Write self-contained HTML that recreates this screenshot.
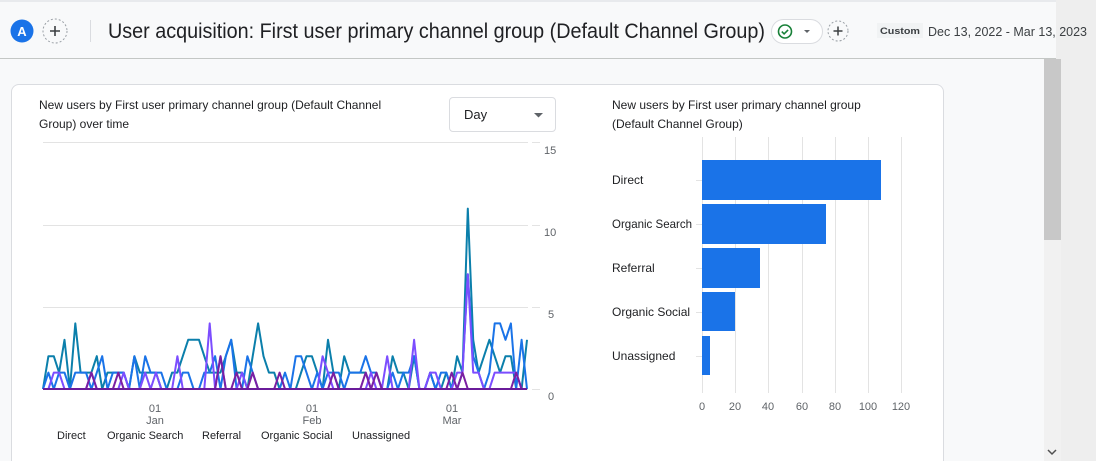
<!DOCTYPE html>
<html style="height:461px;overflow:hidden"><head><meta charset="utf-8"><style>
html,body{margin:0;width:1096px;height:461px;overflow:hidden}
body{background:#eeeeee;font-family:"Liberation Sans",Roboto,sans-serif;position:relative}
.abs{position:absolute}
#main{left:0;top:0;width:1044px;height:461px;background:#f8f9fa}
#hdr{left:0;top:0;width:1056px;height:59px;background:#f8f9fa;border-bottom:1px solid #c4c7c5;border-top:2px solid #e8eaed;box-sizing:border-box}
.card{left:11px;top:84px;width:931px;height:390px;background:#fff;border:1px solid #dadce0;border-radius:8px}
.t{color:#202124}
</style></head><body>
<div class="abs" id="main"></div>
<div class="abs" style="left:1044px;top:59px;width:17px;height:402px;background:#f1f1f1"></div>
<div class="abs" style="left:1044px;top:59px;width:17px;height:181px;background:#c8c8c8"></div>
<svg class="abs" style="left:1046px;top:448px" width="12" height="8"><path d="M2 2l4 4 4-4" fill="none" stroke="#505050" stroke-width="1.5"/></svg>
<div class="abs" id="hdr"></div>
<svg class="abs" style="left:0;top:0" width="1096" height="60" font-family="Liberation Sans">
 <circle cx="22" cy="31" r="11.5" fill="#1a73e8"/>
 <text x="22" y="36" font-size="13" fill="#fff" text-anchor="middle" font-weight="bold">A</text>
 <circle cx="55" cy="31" r="12" fill="none" stroke="#9aa0a6" stroke-dasharray="2,2"/>
 <path d="M55 26v10M50 31h10" stroke="#3c4043" stroke-width="1.6"/>
 <line x1="90.5" y1="20" x2="90.5" y2="42" stroke="#dadce0"/>
 <text x="108" y="38" font-size="21" fill="#202124" textLength="657" lengthAdjust="spacingAndGlyphs">User acquisition: First user primary channel group (Default Channel Group)</text>
 <rect x="771.5" y="19.5" width="51" height="24" rx="12" fill="#fff" stroke="#dadce0"/>
 <circle cx="785" cy="31.5" r="6.5" fill="none" stroke="#188038" stroke-width="1.6"/>
 <path d="M781.8 31.6l2.3 2.3 4-4" fill="none" stroke="#188038" stroke-width="1.6"/>
 <path d="M804 30h6l-3 3z" fill="#5f6368"/>
 <circle cx="838" cy="31" r="10" fill="none" stroke="#9aa0a6" stroke-dasharray="2,2"/>
 <path d="M838 26.5v9M833.5 31h9" stroke="#3c4043" stroke-width="1.5"/>
 <rect x="877" y="23" width="46" height="15" fill="#f1f3f4"/>
 <text x="900" y="34" font-size="9.5" font-weight="bold" fill="#3c4043" text-anchor="middle" textLength="40" lengthAdjust="spacingAndGlyphs">Custom</text>
 <text x="928" y="36" font-size="13" fill="#3c4043" textLength="159" lengthAdjust="spacingAndGlyphs">Dec 13, 2022 - Mar 13, 2023</text>
</svg>
<div class="abs card"></div>
<div class="abs t" style="left:39px;top:96px;font-size:12px;line-height:19px;width:380px">New users by First user primary channel group (Default Channel Group) over time</div>
<div class="abs" style="left:449px;top:97px;width:107px;height:35px;border:1px solid #dadce0;border-radius:4px;box-sizing:border-box"></div>
<div class="abs t" style="left:464px;top:107px;font-size:13px">Day</div>
<svg class="abs" style="left:534px;top:113px" width="10" height="6"><path d="M0 0h9L4.5 4.5z" fill="#5f6368"/></svg>
<div class="abs t" style="left:612px;top:96px;font-size:12px;line-height:19px;width:290px">New users by First user primary channel group (Default Channel Group)</div>
<svg class="abs" style="left:0;top:0" width="1000" height="461" font-family="Liberation Sans">
 <g stroke="#e3e3e3">
  <line x1="43" y1="142.5" x2="528" y2="142.5"/><line x1="43" y1="225.5" x2="528" y2="225.5"/>
  <line x1="43" y1="307.5" x2="528" y2="307.5"/><line x1="43" y1="389.5" x2="528" y2="389.5"/>
  <line x1="532" y1="142.5" x2="540" y2="142.5"/><line x1="532" y1="225.5" x2="540" y2="225.5"/>
  <line x1="532" y1="307.5" x2="540" y2="307.5"/><line x1="532" y1="389.5" x2="540" y2="389.5"/>
 </g>
 <g font-size="11" fill="#5f6368">
  <text x="544" y="154">15</text><text x="544" y="236">10</text><text x="548" y="318">5</text><text x="548" y="400">0</text>
  <text x="155" y="412" text-anchor="middle">01</text><text x="155" y="424" text-anchor="middle">Jan</text>
  <text x="312" y="412" text-anchor="middle">01</text><text x="312" y="424" text-anchor="middle">Feb</text>
  <text x="452" y="412" text-anchor="middle">01</text><text x="452" y="424" text-anchor="middle">Mar</text>
 </g>
 <g font-size="11" fill="#202124">
  <text x="57" y="439">Direct</text><text x="107" y="439">Organic Search</text><text x="202" y="439">Referral</text><text x="261" y="439">Organic Social</text><text x="352" y="439">Unassigned</text>
 </g>
 <g id="lines" fill="none" stroke-width="2" stroke-linejoin="round"></g>
 <g stroke="#e3e3e3">
  <line x1="702.5" y1="137" x2="702.5" y2="393"/><line x1="735.5" y1="137" x2="735.5" y2="393"/>
  <line x1="768.5" y1="137" x2="768.5" y2="393"/><line x1="802.5" y1="137" x2="802.5" y2="393"/>
  <line x1="835.5" y1="137" x2="835.5" y2="393"/><line x1="868.5" y1="137" x2="868.5" y2="393"/>
  <line x1="901.5" y1="137" x2="901.5" y2="393"/>
  <line x1="696" y1="180.5" x2="702" y2="180.5"/><line x1="696" y1="224.5" x2="702" y2="224.5"/>
  <line x1="696" y1="268.5" x2="702" y2="268.5"/><line x1="696" y1="312.5" x2="702" y2="312.5"/>
  <line x1="696" y1="356.5" x2="702" y2="356.5"/>
 </g>
 <g fill="#1a73e8">
  <rect x="702" y="160" width="179" height="40"/><rect x="702" y="204" width="124" height="40"/>
  <rect x="702" y="248" width="58" height="40"/><rect x="702" y="292" width="33" height="39"/>
  <rect x="702" y="336" width="8" height="39"/>
 </g>
 <g font-size="12" fill="#202124">
  <text x="612" y="184">Direct</text><text x="612" y="228" textLength="80" lengthAdjust="spacingAndGlyphs">Organic Search</text><text x="612" y="272">Referral</text><text x="612" y="316">Organic Social</text><text x="612" y="360">Unassigned</text>
 </g>
 <g font-size="11" fill="#5f6368" text-anchor="middle">
  <text x="702" y="410">0</text><text x="735" y="410">20</text><text x="768" y="410">40</text><text x="802" y="410">60</text><text x="835" y="410">80</text><text x="868" y="410">100</text><text x="901" y="410">120</text>
 </g>
</svg>
<script>
var S=[
["#0b7fab",[0,2,2,1,3,0,4,1,1,1,2,0,1,1,1,1,0,2,1,1,1,1,0,0,1,1,2,3,3,3,2,1,1,1,2,3,1,1,0,2,4,2,1,1,0,0,0,0,1,2,2,1,0,3,1,0,2,1,1,1,1,0,0,0,0,2,1,1,0,2,0,0,1,0,0,1,0,2,1,11,3,1,2,3,2,1,2,2,0,0,3]],
["#1a73e8",[0,1,0,1,1,0,1,1,1,0,1,2,0,1,1,1,0,2,0,2,1,1,1,0,0,0,1,1,0,0,1,1,2,0,2,3,0,0,2,1,0,0,0,0,0,1,0,2,2,1,0,1,0,1,1,1,0,1,1,1,2,1,1,0,0,1,0,1,1,2,0,0,1,0,1,1,0,0,1,7,2,1,0,1,4,4,3,4,0,3,0]],
["#7c4dff",[0,0,1,1,0,0,0,0,0,1,0,0,0,0,0,1,0,0,0,1,0,1,0,0,0,2,0,0,0,0,0,4,0,2,0,0,0,1,0,0,0,0,0,0,0,0,0,0,0,0,0,0,2,1,0,0,0,0,0,0,0,1,0,0,2,0,0,0,0,3,0,0,1,1,0,0,0,1,1,7,1,1,0,0,1,1,1,1,1,0,0]],
["#7b1fa2",[0,0,0,0,0,0,0,0,0,1,0,0,0,0,1,0,0,0,0,0,0,0,0,0,0,0,0,0,0,0,0,0,0,2,0,0,1,0,0,1,0,0,0,0,1,0,0,0,0,0,0,0,0,0,1,0,0,0,0,0,1,0,1,0,0,0,0,0,0,0,0,0,0,0,0,0,1,0,1,0,0,0,0,0,0,0,0,0,1,0,0]],
["#6a1b9a",[0,0]]];
var g=document.getElementById('lines');
S.forEach(function(s){var a=s[1];var n=a.length;var p=[];
if(n<3){p=["43,389","527,389"];}else{for(var i=0;i<n;i++){p.push((43+i*484/(n-1)).toFixed(1)+","+(389-a[i]*16.4).toFixed(1));}}
var l=document.createElementNS("http://www.w3.org/2000/svg","polyline");l.setAttribute("points",p.join(" "));l.setAttribute("stroke",s[0]);g.appendChild(l);});
</script>
</body></html>
